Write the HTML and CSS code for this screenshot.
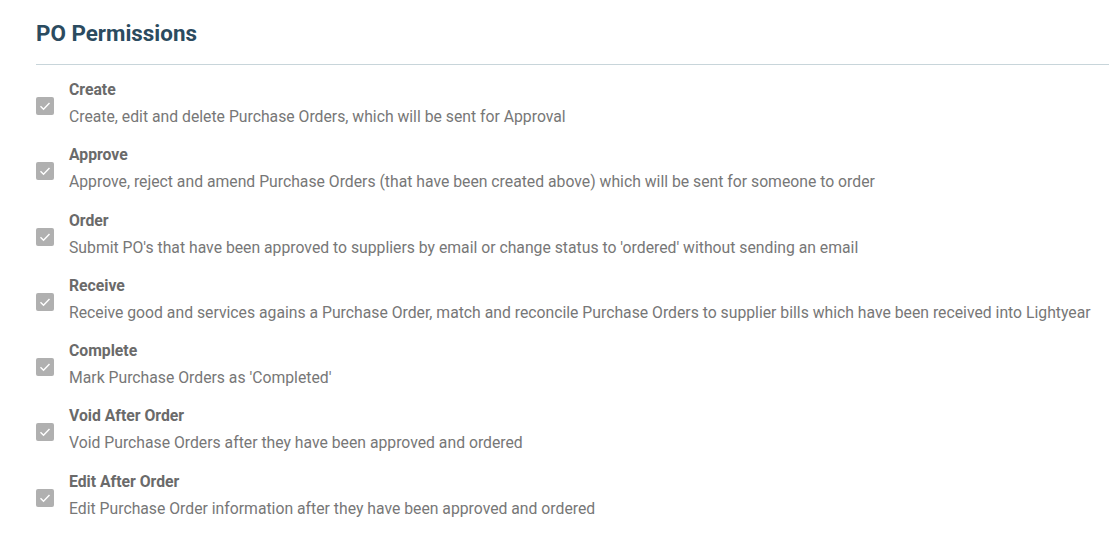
FILE: index.html
```html
<!DOCTYPE html>
<html>
<head>
<meta charset="utf-8">
<link rel="stylesheet" href="styles.css">
</head>
<body>
<div class="panel">
  <h2 class="title">PO Permissions</h2>
  <div class="list">
    <div class="item">
      <span class="check"><svg viewBox="0 0 18 18"><path d="M4.5 9.3l3 3 6-6.3" /></svg></span>
      <div class="text"><div class="name">Create</div><div class="desc">Create, edit and delete Purchase Orders, which will be sent for Approval</div></div>
    </div>
    <div class="item">
      <span class="check"><svg viewBox="0 0 18 18"><path d="M4.5 9.3l3 3 6-6.3" /></svg></span>
      <div class="text"><div class="name">Approve</div><div class="desc">Approve, reject and amend Purchase Orders (that have been created above) which will be sent for someone to order</div></div>
    </div>
    <div class="item">
      <span class="check"><svg viewBox="0 0 18 18"><path d="M4.5 9.3l3 3 6-6.3" /></svg></span>
      <div class="text"><div class="name">Order</div><div class="desc">Submit PO's that have been approved to suppliers by email or change status to 'ordered' without sending an email</div></div>
    </div>
    <div class="item">
      <span class="check"><svg viewBox="0 0 18 18"><path d="M4.5 9.3l3 3 6-6.3" /></svg></span>
      <div class="text"><div class="name">Receive</div><div class="desc">Receive good and services agains a Purchase Order, match and reconcile Purchase Orders to supplier bills which have been received into Lightyear</div></div>
    </div>
    <div class="item">
      <span class="check"><svg viewBox="0 0 18 18"><path d="M4.5 9.3l3 3 6-6.3" /></svg></span>
      <div class="text"><div class="name">Complete</div><div class="desc">Mark Purchase Orders as 'Completed'</div></div>
    </div>
    <div class="item">
      <span class="check"><svg viewBox="0 0 18 18"><path d="M4.5 9.3l3 3 6-6.3" /></svg></span>
      <div class="text"><div class="name">Void After Order</div><div class="desc">Void Purchase Orders after they have been approved and ordered</div></div>
    </div>
    <div class="item">
      <span class="check"><svg viewBox="0 0 18 18"><path d="M4.5 9.3l3 3 6-6.3" /></svg></span>
      <div class="text"><div class="name">Edit After Order</div><div class="desc">Edit Purchase Order information after they have been approved and ordered</div></div>
    </div>
  </div>
</div>
</body>
</html>
```

FILE: styles.css
```css
html, body {
  margin: 0;
  padding: 0;
  background: #fff;
  font-family: Roboto, "Liberation Sans", sans-serif;
}
.panel {
  padding: 19px 0 0 36px;
}
.title {
  margin: 0;
  font-size: 22.4px;
  font-weight: 700;
  color: #2b4b60;
  line-height: 28px;
  padding-bottom: 17px;
  border-bottom: 1px solid #c8d5da;
}
.list {
  display: flex;
  flex-direction: column;
  gap: 13.3px;
  padding-top: 14px;
}
.item {
  display: flex;
  align-items: center;
  gap: 15px;
}
.check {
  width: 18px;
  height: 18px;
  border-radius: 2px;
  background: #b0b0b0;
  flex: none;
  display: flex;
  margin-top: 2px;
}
.check svg {
  width: 18px;
  height: 18px;
}
.check path {
  fill: none;
  stroke: #fff;
  stroke-width: 1.4;
}
.name {
  font-size: 15.75px;
  font-weight: 700;
  color: #6a6a6a;
  line-height: 22px;
}
.desc {
  font-size: 15.75px;
  color: #777;
  line-height: 28px;
  margin-top: 2px;
  white-space: nowrap;
}
```
